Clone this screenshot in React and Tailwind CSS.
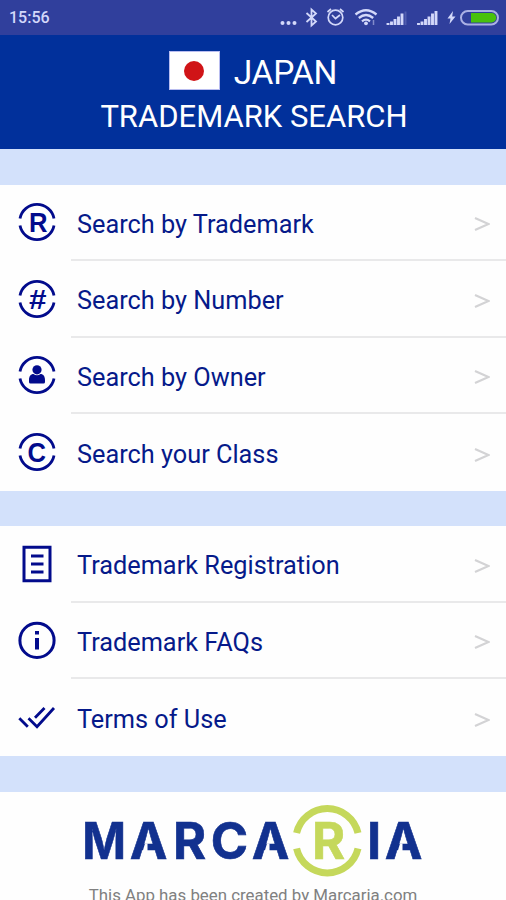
const NAVY = "#020b8c";

export default function App() {
  return (
    <main className="h-[900px] w-[506px] overflow-hidden bg-[#fefefe] font-['Roboto',sans-serif]">
      <StatusBar />

      <header className="flex h-[114px] flex-col items-center bg-[#01309b] text-white">
        <div className="mt-[16px] flex h-[39px] items-center gap-[14px]">
          <div className="flex h-[39px] w-[51px] items-center justify-center border border-[#b9bdf0] bg-white">
            <span className="size-5 rounded-full bg-[#d01417]" />
          </div>
          <span className="mt-[4px] text-[33.5px] leading-[39px] tracking-[-0.2px]">JAPAN</span>
        </div>
        <h1 className="mt-[7px] pl-[2px] text-[31px] leading-[40px]">TRADEMARK SEARCH</h1>
      </header>

      <Band />

      <nav className="h-[306px]">
        <Row icon={<RingLetter letter="R" x={21.2} />} label="Search by Trademark" />
        <Row icon={<RingLetter letter="#" x={20.7} />} label="Search by Number" />
        <Row icon={<RingPerson />} label="Search by Owner" />
        <Row icon={<RingLetter letter="C" x={19.8} />} label="Search your Class" last />
      </nav>

      <Band />

      <nav className="h-[230px]">
        <Row icon={<DocIcon />} label="Trademark Registration" />
        <Row icon={<InfoIcon />} label="Trademark FAQs" />
        <Row icon={<ChecksIcon />} label="Terms of Use" last />
      </nav>

      <Band />

      <footer className="flex flex-col items-center">
        <Logo />
        <p className="mt-[6px] text-[16.85px] leading-[20px] text-[#808080]">
          This App has been created by Marcaria.com
        </p>
      </footer>
    </main>
  );
}

function Band() {
  return <div className="h-[35.5px] bg-[#d3e1fb]" />;
}

function Row({ icon, label, last }) {
  return (
    <a className="flex h-[76.6px]">
      <span className="flex w-[71px] items-center pb-[1.4px] pl-[17px]">{icon}</span>
      <span
        className={
          last
            ? "flex flex-1 items-center pb-[0.5px] pl-[6px]"
            : "flex flex-1 items-center border-b-2 border-[#e9e9ea] pl-[6px]"
        }
      >
        <span className="mt-[5.6px] flex-1 text-[25.3px] leading-[30px] text-[#061a8a]">{label}</span>
        <svg className="mt-[5px] mr-[16px] h-4 w-4" viewBox="0 0 16 16" fill="none">
          <path d="M1 2L14.5 8L1 14" stroke="#d3d3d5" strokeWidth="2.2" />
        </svg>
      </span>
    </a>
  );
}

function Ring({ children }) {
  return (
    <svg className="size-10" viewBox="0 0 40 40">
      <g fill="none" stroke={NAVY} strokeWidth="2.8">
        <path d="M3 16.500A17.300 17.300 0 0 1 37 16.500" />
        <path d="M3 23.500A17.300 17.300 0 0 0 37 23.500" />
      </g>
      {children}
    </svg>
  );
}

function RingLetter({ letter, x }) {
  return (
    <Ring>
      <text
        x={x}
        y="29.5"
        textAnchor="middle"
        fontFamily="'Liberation Sans', sans-serif"
        fontWeight="700"
        fontSize="28"
        textLength={letter === "#" ? 17.5 : 18.5}
        lengthAdjust="spacingAndGlyphs"
        fill={NAVY}
      >
        {letter}
      </text>
    </Ring>
  );
}

function RingPerson() {
  return (
    <Ring>
      <g fill={NAVY}>
        <circle cx="20" cy="14.8" r="4.6" />
        <path d="M12 25c0-4 2-6 4.500-6c2 1.700 5 1.700 7 0c2.500 0 4.500 2 4.500 6v2q0 1.500-1.500 1.500h-13q-1.500 0-1.500-1.500z" />
      </g>
    </Ring>
  );
}

function DocIcon() {
  return (
    <svg className="size-10" viewBox="0 0 40 40" fill="none" stroke={NAVY} strokeWidth="3">
      <path d="M7 3.200H33V36.800H7z" />
      <path d="M14 12H26.500M14 20H26.500M14 28H26.500" />
    </svg>
  );
}

function InfoIcon() {
  return (
    <svg className="size-10" viewBox="0 0 40 40" fill="none" stroke={NAVY} strokeWidth="3">
      <circle cx="20" cy="20.4" r="17.1" />
      <path d="M20 11V14.500M20 18V29.500" strokeWidth="4" />
    </svg>
  );
}

function ChecksIcon() {
  return (
    <svg className="size-10" viewBox="0 0 40 40" fill="none" stroke={NAVY} strokeWidth="2.8">
      <path d="M2.300 21.300L10.800 29.800M11.500 21.300L20 29.800L37 11M18 20.700L27.500 11" />
    </svg>
  );
}

const LETTERS = [
  { ch: "M", x: 85, w: 38 },
  { ch: "A", x: 131, w: 35 },
  { ch: "R", x: 174.5, w: 30 },
  { ch: "C", x: 212, w: 35 },
  { ch: "A", x: 253, w: 35 },
  { ch: "I", x: 370, w: 8 },
  { ch: "A", x: 386, w: 35 },
];

function Logo() {
  return (
    <svg className="h-[87px] w-[506px]" viewBox="0 792 506 87">
      <g
        fontFamily="Inter, sans-serif"
        fontWeight="700"
        fontSize="50.5"
        textAnchor="middle"
        fill="#12318f"
        stroke="#12318f"
        strokeWidth="0.6"
      >
        {LETTERS.map(({ ch, x, w }) => (
          <text
            key={x}
            transform={
              ch === "M"
                ? `translate(${x + w / 2} 859) scale(0.93 1)`
                : `translate(${x + w / 2} 859)`
            }
          >
            {ch}
          </text>
        ))}
        <text x="328.7" y="859" fill="#c5d85b" stroke="#c5d85b">
          R
        </text>
      </g>
      {/* cut in the left half of each A's crossbar */}
      <g fill="#fefefe">
        <path d="M145 843.500L142.300 852.500H147.500V843.500z" />
        <path d="M267 843.500L264.300 852.500H269.500V843.500z" />
        <path d="M400 843.500L397.300 852.500H402.500V843.500z" />
      </g>
      <g fill="none" stroke="#c5d85b" strokeWidth="7">
        <path d="M296.600 833A31.500 31.500 0 0 1 358 833" />
        <path d="M296.600 848.500A31.500 31.500 0 0 0 358 848.500" />
      </g>
    </svg>
  );
}

function StatusBar() {
  return (
    <div className="flex h-[35px] items-center justify-between bg-[#303f9c] pr-[7px] pl-[9px] text-[#d3d8fa]">
      <span className="text-[16px] font-medium">15:56</span>
      <svg className="h-[35px] w-[220px]" viewBox="279 0 220 35" fill="none" stroke="currentColor">
        <g fill="currentColor" stroke="none">
          <circle cx="282.500" cy="23" r="2" />
          <circle cx="288.500" cy="23" r="2" />
          <circle cx="294.500" cy="23" r="2" />
        </g>
        <path d="M306.500 13L316 21.500L311.500 25.500V9.500L316 13.500L306.500 22" strokeWidth="1.800" />
        <circle cx="335.500" cy="17.500" r="7.300" strokeWidth="1.700" />
        <path d="M332 15L335.500 18.500L340 15M327.500 12L331 9M343.500 12L340 9" strokeWidth="1.700" />
        <path
          d="M355.500 14.500Q366 6 376.500 14.500M358.800 18Q366 12 373.200 18M362 21.300Q366 18 370 21.300"
          strokeWidth="2.300"
        />
        <circle cx="366" cy="23.300" r="1.900" fill="currentColor" stroke="none" />
        <path d="M373.500 20V25" strokeWidth="1.500" opacity="0.500" />
        <path d="M388 25V23M391.500 25V21.500M395 25V19M398.500 25V16.500M402 25V13.500" strokeWidth="2.900" />
        <path d="M405.500 25V11.500" strokeWidth="2" opacity="0.200" />
        <path
          d="M418.500 25V23M422 25V21.500M425.500 25V19M429 25V16.500M432.500 25V13.500M436 25V11"
          strokeWidth="2.900"
        />
        <path d="M453 11L447.500 18.500H450.500L449.500 24L455.500 16.500H452.200z" fill="currentColor" stroke="none" />
        <rect x="461" y="11" width="37" height="13.500" rx="6.700" stroke="#aab0e4" strokeWidth="2" />
        <path d="M471 13H491.500A4.700 4.700 0 0 1 491.500 22.500H471z" fill="#48c10d" stroke="none" />
      </svg>
    </div>
  );
}
